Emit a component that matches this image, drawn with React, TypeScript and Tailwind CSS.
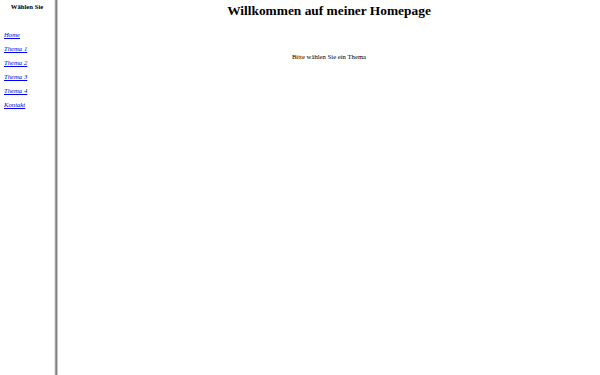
export default function App() {
  const links = ["Home", "Thema 1", "Thema 2", "Thema 3", "Thema 4", "Kontakt"];
  return (
    <div className="flex h-[375px] w-[600px] overflow-hidden bg-white text-black" style={{ fontFamily: '"Liberation Serif", "Times New Roman", serif' }}>
      <div className="w-[54px] shrink-0 flex flex-col">
        <div className="text-center text-[6.7px] font-bold leading-[8px] mt-[3px]">Wählen Sie</div>
        <div className="flex flex-col gap-[6px] mt-[20px] pl-[4px]">
          {links.map((l) => (
            <a key={l} href="#" className="text-[6.7px] leading-[8px] italic underline text-[#0000ee]">{l}</a>
          ))}
        </div>
      </div>
      <div className="flex shrink-0">
        <div className="w-px bg-[#e3e3e3]" />
        <div className="w-px bg-[#a0a0a0]" />
        <div className="w-px bg-[#808080]" />
        <div className="w-px bg-[#c4c4c4]" />
      </div>
      <div className="flex-1 flex flex-col items-center">
        <h1 className="text-[13.4px] font-bold leading-[16px] mt-[3px]">Willkommen auf meiner Homepage</h1>
        <p className="text-[6.7px] leading-[8px] mt-[34px]">Bitte wählen Sie ein Thema</p>
      </div>
    </div>
  );
}
